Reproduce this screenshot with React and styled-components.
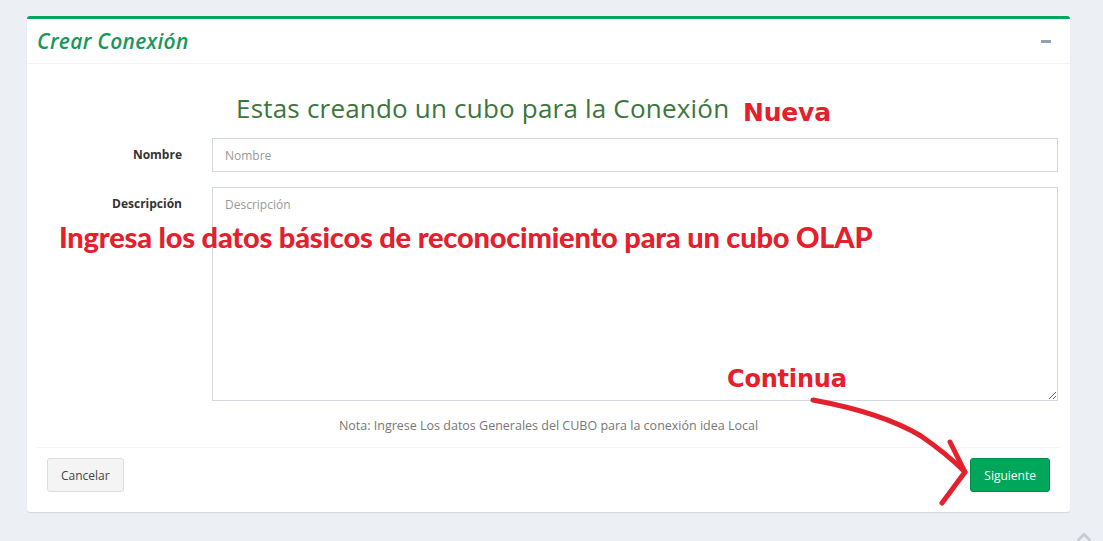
import React from 'react';
import styled, { createGlobalStyle } from 'styled-components';
import { ChevronUp } from 'lucide-react';

const GlobalStyle = createGlobalStyle`
    html, body {
        margin: 0;
        padding: 0;
        background: #ecf0f5;
        font-family: "Open Sans", "Noto Sans", sans-serif;
        color: #333;
    }
    * {
        box-sizing: border-box;
    }
`;

const fields = [
    { label: 'Nombre', placeholder: 'Nombre', multiline: false },
    { label: 'Descripción', placeholder: 'Descripción', multiline: true },
];

const App = () => (
    <Page>
        <GlobalStyle />
        <Box>
            <BoxHeader>
                <BoxTitle>Crear Conexión</BoxTitle>
                <ToolButton aria-label="minimizar">
                    <MinusBar />
                </ToolButton>
            </BoxHeader>
            <BoxBody>
                <Heading>Estas creando un cubo para la Conexión</Heading>
                {fields.map((field) => (
                    <FormGroup key={field.label}>
                        <Label>{field.label}</Label>
                        {field.multiline
                            ? <TextArea placeholder={field.placeholder} />
                            : <Input placeholder={field.placeholder} />}
                    </FormGroup>
                ))}
                <Note>Nota: Ingrese Los datos Generales del CUBO para la conexión idea Local</Note>
                <BoxFooter>
                    <Button>Cancelar</Button>
                    <Button primary>Siguiente</Button>
                </BoxFooter>
            </BoxBody>

            {/* notas rojas pintadas encima de la captura */}
            <Annotation rounded size={25} style={{ left: 716, top: 81 }}>Nueva</Annotation>
            <Annotation size={29} style={{ left: 32, top: 203 }}>
                Ingresa los datos básicos de reconocimiento para un cubo OLAP
            </Annotation>
            <Annotation rounded size={24} style={{ left: 700, top: 348 }}>Continua</Annotation>
            <ArrowMark width="200" height="130" viewBox="0 0 200 130">
                <path d="M30 20 Q 100 33, 138 56 Q 164 74, 182 92" />
                <path d="M167 62 L 182 92 L 159 123" />
            </ArrowMark>
        </Box>
        <ScrollTop>
            <ChevronUp size={22} strokeWidth={3} />
        </ScrollTop>
    </Page>
);

const Page = styled.div`
    position: relative;
    min-height: 541px;
    padding: 16px 33px 0 27px;
    overflow: hidden;
`;

const Box = styled.div`
    position: relative;
    background: #fff;
    border-top: 3px solid #00a65a;
    border-radius: 3px;
    box-shadow: 0 1px 1px rgba(0, 0, 0, 0.1);
`;

const BoxHeader = styled.div`
    display: flex;
    align-items: center;
    justify-content: space-between;
    height: 45px;
    padding: 0 10px;
    border-bottom: 1px solid #f4f4f4;
`;

const BoxTitle = styled.h3`
    margin: 0;
    font-size: 21px;
    font-style: italic;
    font-weight: 600;
    color: #18985a;
    letter-spacing: 0.3px;
`;

const ToolButton = styled.button`
    display: flex;
    align-items: center;
    justify-content: center;
    width: 26px;
    height: 26px;
    margin-right: 1px;
    padding: 0;
    border: 0;
    background: transparent;
`;

const MinusBar = styled.span`
    display: block;
    width: 10px;
    height: 3px;
    background: #97a0b3;
`;

const BoxBody = styled.div`
    padding: 10px;
`;

const Heading = styled.h3`
    margin: 20px 0 15px 199px;
    font-size: 26px;
    font-weight: 400;
    line-height: 29px;
    letter-spacing: 0.2px;
    color: #3c763d;
`;

const FormGroup = styled.div`
    display: grid;
    grid-template-columns: 145px 1fr;
    column-gap: 30px;
    align-items: start;
    margin-bottom: 15px;
    padding-right: 2px;
`;

const Label = styled.label`
    padding-top: 8px;
    text-align: right;
    font-size: 12px;
    font-weight: 700;
    color: #333;
`;

const Input = styled.input`
    height: 34px;
    width: 100%;
    padding: 6px 12px;
    border: 1px solid #d2d6de;
    border-radius: 0;
    font-family: inherit;
    font-size: 12px;
    color: #555;
    &::placeholder {
        color: #999;
    }
`;

const TextArea = styled.textarea`
    display: block;
    height: 214px;
    width: 100%;
    padding: 8px 12px;
    border: 1px solid #d2d6de;
    border-radius: 0;
    font-family: inherit;
    font-size: 12px;
    color: #555;
    resize: vertical;
    &::placeholder {
        color: #999;
    }
`;

const Note = styled.p`
    margin: 13px 0 11px;
    line-height: 20px;
    text-align: center;
    font-size: 12.5px;
    color: #777;
`;

const BoxFooter = styled.div`
    display: flex;
    justify-content: space-between;
    padding: 10px;
    border-top: 1px solid #f4f4f4;
`;

const Button = styled.button`
    height: 34px;
    padding: 0 13px;
    border: 1px solid ${(p) => (p.primary ? '#008d4c' : '#ddd')};
    border-radius: 3px;
    background: ${(p) => (p.primary ? '#00a65a' : '#f4f4f4')};
    color: ${(p) => (p.primary ? '#fff' : '#444')};
    font-family: inherit;
    font-size: 12px;
`;

const Annotation = styled.span`
    position: absolute;
    white-space: nowrap;
    font-family: ${(p) => (p.rounded ? '"DejaVu Sans"' : 'Lato')}, sans-serif;
    font-size: ${(p) => p.size}px;
    font-weight: 900;
    line-height: 1;
    color: #e3202b;
    letter-spacing: -0.2px;
`;

const ArrowMark = styled.svg`
    position: absolute;
    left: 756px;
    top: 361px;
    fill: none;
    stroke: #e3202b;
    stroke-width: 5;
    stroke-linecap: round;
    stroke-linejoin: round;
`;

const ScrollTop = styled.div`
    position: absolute;
    right: 8px;
    bottom: -12px;
    color: #c8ccd2;
`;

export default App;
